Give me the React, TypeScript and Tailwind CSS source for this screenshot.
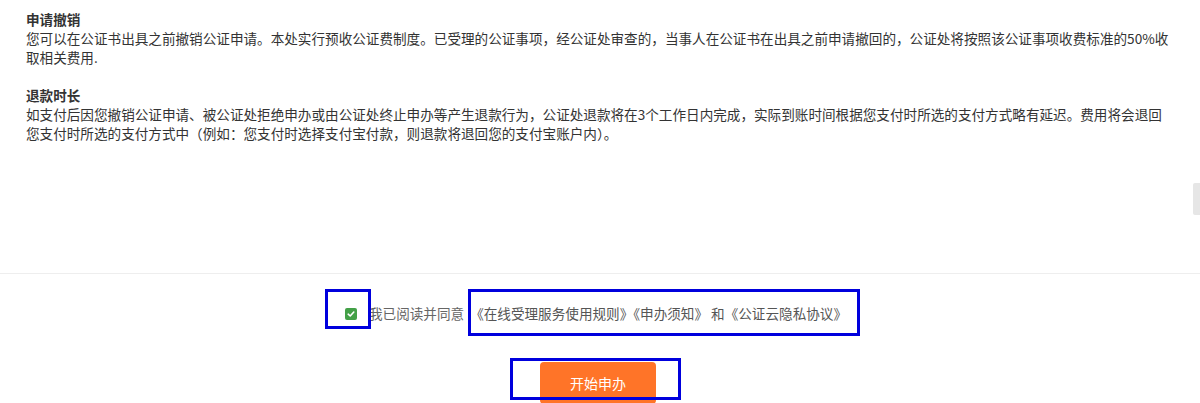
import React from "react";

export default function App() {
  const font = { fontFamily: '"Noto Sans CJK SC", "Noto Sans", sans-serif' };
  return (
    <div className="relative w-[1200px] h-[403px] overflow-hidden bg-white" style={font}>
      <div className="h-[273px] px-[26px] pt-[10px] text-[13.6px] leading-[19px] text-[#333]">
        <div className="font-bold whitespace-nowrap">申请撤销</div>
        <div className="whitespace-nowrap">
          您可以在公证书出具之前撤销公证申请。本处实行预收公证费制度。已受理的公证事项，经公证处审查的，当事人在公证书在出具之前申请撤回的，公证处将按照该公证事项收费标准的50%收
        </div>
        <div className="whitespace-nowrap">取相关费用.</div>
        <div className="h-[19px]" />
        <div className="font-bold whitespace-nowrap">退款时长</div>
        <div className="whitespace-nowrap">
          如支付后因您撤销公证申请、被公证处拒绝申办或由公证处终止申办等产生退款行为，公证处退款将在3个工作日内完成，实际到账时间根据您支付时所选的支付方式略有延迟。费用将会退回
        </div>
        <div className="whitespace-nowrap">
          您支付时所选的支付方式中（例如：您支付时选择支付宝付款，则退款将退回您的支付宝账户内）。
        </div>
      </div>
      <div className="border-t border-[#eeeeee]">
        <div className="flex justify-center items-center pt-[30px] pr-[8px] text-[13.6px] leading-[19px] text-[#666]">
          <span className="w-[12px] h-[12px] rounded-[2px] bg-[#43a047] flex items-center justify-center">
            <svg width="8" height="8" viewBox="0 0 8 8">
              <path d="M1.2 4.2 L3.2 6 L6.8 2" fill="none" stroke="white" strokeWidth="1.6" strokeLinecap="round" strokeLinejoin="round" />
            </svg>
          </span>
          <span className="ml-[12px] whitespace-nowrap">我已阅读并同意</span>
          <span className="ml-[6px] whitespace-nowrap text-[#555]">
            《在线受理服务使用规则》《申办须知》 和《公证云隐私协议》
          </span>
        </div>
        <div className="flex justify-center mt-[39px]">
          <button className="w-[116px] h-[42px] rounded-[4px] bg-[#ff7428] text-white text-[14px] ml-[-4px]">
            开始申办
          </button>
        </div>
      </div>

      {/* scrollbar thumb */}
      <div className="absolute left-[1193px] top-[183px] w-[7px] h-[32px] bg-[#e6e6e6] rounded-l-[2px]" />

      {/* annotation boxes */}
      <div className="absolute left-[325px] top-[289px] w-[46px] h-[40px] border-[3px] border-[#0000dd]" />
      <div className="absolute left-[468px] top-[289px] w-[392px] h-[47px] border-[3px] border-[#0000dd]" />
      <div className="absolute left-[510px] top-[358px] w-[171px] h-[42px] border-[3px] border-[#0000dd]" />
    </div>
  );
}
